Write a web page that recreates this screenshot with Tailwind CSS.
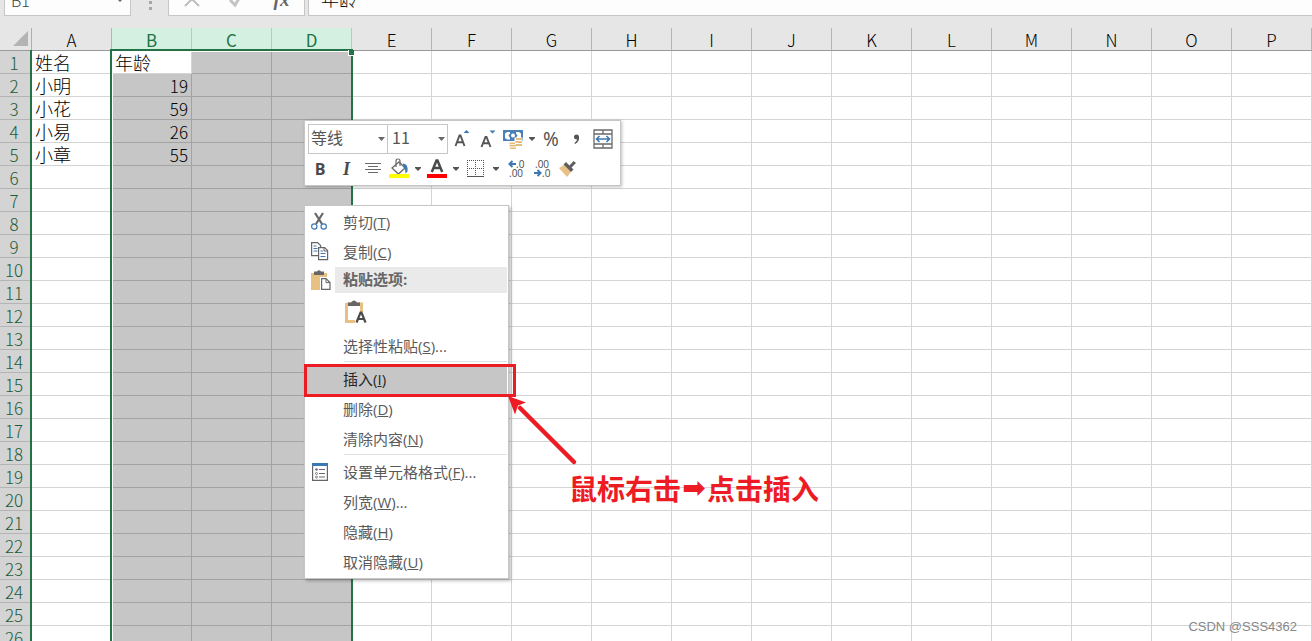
<!DOCTYPE html>
<html lang="zh-CN">
<head>
<meta charset="utf-8">
<title>工作表</title>
<script src="https://cdn.jsdelivr.net/npm/@tailwindcss/browser@4"></script>
</head>
<body class="relative h-screen overflow-hidden bg-[#e6e6e6] font-['Noto_Sans_CJK_SC',sans-serif] text-black">

<!-- Formula bar, scrolled partly out of view -->
<header class="flex h-4 items-end overflow-hidden pl-1 text-[#444]">
  <label class="flex h-7 w-[127px] shrink-0 items-center justify-between border border-[#c6c6c6] bg-[#fdfdfd] pr-1.5 pb-1 pl-1.5">
    <input aria-label="名称框" value="B1" class="w-20 bg-transparent text-[16px] leading-6 font-light outline-none">
    <svg class="h-1 w-2" viewBox="0 0 8 4"><path d="M0 0h8L4 4z" fill="#666"/></svg>
  </label>
  <div class="flex h-7 w-[37px] shrink-0 items-center justify-center">
    <svg class="h-5 w-1" viewBox="0 0 4 20"><path d="M1 3h3v3H1zM1 9h3v3H1zM1 15h3v3H1z" fill="#a6a6a6"/></svg>
  </div>
  <div class="flex h-7 w-[137px] shrink-0 items-center justify-around border border-[#c6c6c6] bg-[#fdfdfd] pb-1">
    <button aria-label="取消"><svg class="h-4 w-4" viewBox="0 0 16 16"><path d="M1 0l14 14M15 0L1 14" stroke="#bdbdbd" stroke-width="2" fill="none"/></svg></button>
    <button aria-label="输入"><svg class="h-4 w-4" viewBox="0 0 16 16"><path d="M1 8l5 5 8-13" stroke="#c4c4c4" stroke-width="3" fill="none"/></svg></button>
    <button aria-label="插入函数" class="font-['Liberation_Serif',serif] text-[19px] leading-6 font-bold text-[#666] italic">fx</button>
  </div>
  <input aria-label="编辑栏" value="年龄" class="ml-[3px] h-7 min-w-0 flex-1 border border-r-0 border-[#c6c6c6] bg-[#fdfdfd] pb-2 pl-3 text-[18px] font-light text-black outline-none">
</header>

<!-- Worksheet -->
<main class="relative mt-3">
  <table class="w-max table-fixed border-separate border-spacing-0 bg-white leading-[21px] font-light">
    <thead><tr id="letters"></tr></thead>
    <tbody id="rows"></tbody>
  </table>
  <div class="absolute top-[22px] bottom-0 left-[30px] w-0.5 bg-[#217346]"></div>
  <div class="absolute top-[21px] bottom-0 left-[110px] w-[243px] border-2 border-b-0 border-[#217346]">
    <div class="h-full border-t border-l border-white"></div>
    <div class="absolute -top-px -right-[3px] size-[6px] border border-t-0 border-r-0 border-white bg-[#217346]"></div>
  </div>
</main>

<!-- Mini toolbar -->
<div role="toolbar" aria-label="格式" class="absolute top-[120px] left-[304px] border border-[#c6c6c6] bg-white p-0.5 pr-1 shadow-[1px_1px_3px_rgba(0,0,0,0.25)]">
  <div class="flex h-[31px] items-center pl-px">
    <div class="relative h-[30px] w-[80px] border border-[#c6c6c6]">
      <select aria-label="字体" class="h-full w-full appearance-none pb-1.5 pl-0.5 text-[16px] leading-[22px] text-[#555]"><option>等线</option></select>
      <svg class="pointer-events-none absolute top-3 right-0.5 h-1 w-[7px]" viewBox="0 0 7 4"><path d="M0 0h7L3.500 4z" fill="#666"/></svg>
    </div>
    <div class="relative h-[30px] w-[60px] border border-l-0 border-[#c6c6c6]">
      <select aria-label="字号" class="h-full w-full appearance-none pb-1.5 pl-1 text-[16px] leading-[22px] text-[#555]"><option>11</option></select>
      <svg class="pointer-events-none absolute top-3 right-0.5 h-1 w-[7px]" viewBox="0 0 7 4"><path d="M0 0h7L3.500 4z" fill="#666"/></svg>
    </div>
    <button aria-label="增大字号" class="flex w-[26px] justify-center"><svg class="size-5" viewBox="0 0 20 20"><path d="M4.500 17L8.500 6.500h1L13.500 17M6 13.200h6" fill="none" stroke="#555" stroke-width="1.900"/><path d="M12.500 4h6l-3-3z" fill="#3c78b4"/></svg></button>
    <button aria-label="减小字号" class="flex w-[26px] justify-center"><svg class="size-5" viewBox="0 0 20 20"><path d="M4.500 18L8.500 8h1L13.500 18M6 14.200h6" fill="none" stroke="#555" stroke-width="1.900"/><path d="M12.500 1.500h6l-3 3z" fill="#3c78b4"/></svg></button>
    <button aria-label="会计数字格式" class="flex w-[26px] justify-center"><svg class="h-5 w-5" viewBox="0 0 20 20"><path d="M0 1h20v11H0z" fill="#4a81b8"/><path d="M2 4.500L4 3h3v1.500L5.500 6.500 7 9v1.500H4L2 9zM18 4.500L16 3h-3v1.500l1.500 2L13 9h5z" fill="#fff"/><circle cx="10" cy="6.500" r="2" fill="#fff"/><path d="M11.500 8.500h8v9h-5v2.500h-9v-7h6z" fill="#fff"/><path d="M13 9h6v2h-6zM12.500 12h6.500v2h-6.500zM12.500 15H19v2h-6.500zM6.500 13.500h5.500v1.800H6.500zM6.500 16h6v1.600h-6zM7 18.400h6V20H7z" fill="#e5bd7d"/></svg></button>
    <button aria-label="更多货币格式" class="flex w-3 justify-center"><svg class="h-1 w-1.5" viewBox="0 0 6 4"><path d="M0 0h6v1L3 4 0 1z" fill="#555"/></svg></button>
    <button aria-label="百分比样式" class="w-[26px] text-center font-['Noto_Sans',sans-serif] text-[19px] leading-6 text-[#555]">%</button>
    <button aria-label="千位分隔样式" class="flex w-[26px] justify-center"><svg class="h-3 w-2" viewBox="0 0 8 12"><path d="M1 4a2.500 2.500 0 0 1 5 0C6.500 7 5 9.500 2 11l-.6-1C3.200 8.800 4 7.500 4 6.300 2 6.500 1 5.500 1 4z" fill="#555"/></svg></button>
    <button aria-label="合并后居中" class="flex w-[26px] justify-center"><svg class="h-5 w-5" viewBox="0 0 20 20"><path d="M1 1h18v18H1zM1 5h18M1 15h18M10 1v4M10 15v4" fill="none" stroke="#6a6a6a" stroke-width="1.300"/><path d="M4 10h12M6.500 7L3.500 10l3 3M13.500 7l3 3-3 3" fill="none" stroke="#3c78b4" stroke-width="1.600"/></svg></button>
  </div>
  <div class="flex h-[29px] items-center text-[#4a4a4a]">
    <button aria-label="加粗" class="w-[26px] text-center font-['Open_Sans',sans-serif] text-[16px] leading-6 font-bold">B</button>
    <button aria-label="倾斜" class="w-[27px] text-center font-['Liberation_Serif',serif] text-[18px] leading-6 font-bold italic">I</button>
    <button aria-label="居中" class="flex w-[26px] justify-center"><svg class="h-[15px] w-4" viewBox="0 0 16 15"><path d="M0 2.500h16M3 5.500h10M0 8.500h16M3 11.500h10" stroke="#6a6a6a"/></svg></button>
    <button aria-label="填充颜色" class="flex w-[26px] justify-center"><svg class="h-[21px] w-5" viewBox="0 0 20 21"><path d="M3 10l7-6 6 6-6.500 6z" fill="#fff" stroke="#6a6a6a" stroke-width="1.300"/><path d="M7 9V3q0-2 2-2t2 2v5" fill="none" stroke="#6a6a6a" stroke-width="1.200"/><path d="M13.500 5.500q6 0 5 8l-2 2q0-4-1.500-6z" fill="#3c78b4"/><path d="M0 16h20v4H0z" fill="#ff0"/></svg></button>
    <button aria-label="更多填充颜色" class="flex w-3 justify-center"><svg class="h-1 w-1.5" viewBox="0 0 6 4"><path d="M0 0h6v1L3 4 0 1z" fill="#555"/></svg></button>
    <button aria-label="字体颜色" class="flex w-[26px] justify-center"><svg class="h-[21px] w-5" viewBox="0 0 20 21"><path d="M4.800 14L9.500 2.500h1L15.200 14M6.500 10h7" fill="none" stroke="#4a4a4a" stroke-width="2.500"/><path d="M0 16h20v4H0z" fill="red"/></svg></button>
    <button aria-label="更多字体颜色" class="flex w-3 justify-center"><svg class="h-1 w-1.5" viewBox="0 0 6 4"><path d="M0 0h6v1L3 4 0 1z" fill="#555"/></svg></button>
    <button aria-label="边框" class="flex w-7 justify-center"><svg class="h-[19px] w-[18px]" viewBox="0 0 18 19" shape-rendering="crispEdges"><path d="M0 1.500h17M0 9.500h17M.500 1v17M8.500 1v17M16.500 1v17" stroke="#555" stroke-dasharray="1 1" fill="none"/><path d="M0 17.500h17" stroke="#555"/></svg></button>
    <button aria-label="更多边框" class="flex w-3 justify-center"><svg class="h-1 w-1.5" viewBox="0 0 6 4"><path d="M0 0h6v1L3 4 0 1z" fill="#555"/></svg></button>
    <button aria-label="增加小数位数" class="w-[26px] pl-1.5 text-center font-['Open_Sans',sans-serif] text-[10px] leading-[9px] font-medium"><span class="flex items-center"><svg class="h-2 w-2" viewBox="0 0 8 8"><path d="M8 4H2M4.500 1l-3 3 3 3" fill="none" stroke="#3c78b4" stroke-width="2"/></svg>.0</span><span class="block pl-px text-left">.00</span></button>
    <button aria-label="减少小数位数" class="w-[26px] pl-1.5 text-center font-['Open_Sans',sans-serif] text-[10px] leading-[9px] font-medium"><span class="block pl-px text-left">.00</span><span class="flex items-center"><svg class="h-2 w-2" viewBox="0 0 8 8"><path d="M0 4h6M3.500 1l3 3-3 3" fill="none" stroke="#3c78b4" stroke-width="2"/></svg>.0</span></button>
    <button aria-label="格式刷" class="flex w-7 justify-center"><svg class="h-4 w-[18px]" viewBox="0 0 18 16"><path d="M0 7l5-3 7 7-4 5z" fill="#e9c083"/><path d="M4.500 3.500L7 1l3.500 3.500L14.500 0 17 2l-4.500 4.500 2 2-2.500 2.500z" fill="#5f5f5f"/></svg></button>
  </div>
</div>

<!-- Context menu -->
<div role="menu" class="absolute top-[205px] left-[304px] w-[205px] border border-[#c6c6c6] bg-white p-px text-[#5a5a5a] shadow-[2px_2px_3px_rgba(0,0,0,0.25)] font-['Open_Sans','Noto_Sans_CJK_SC',sans-serif] text-[15px] leading-[30px]">
  <button role="menuitem" class="flex h-[30px] w-full items-center text-left">
    <span class="flex w-[37px] shrink-0 pl-[5px]"><svg class="h-5 w-[18px]" viewBox="0 0 18 20"><path d="M4 1l7 11M12 1L5 12" stroke="#666" stroke-width="2.200"/><circle cx="3.300" cy="14.500" r="2.700" fill="#fff" stroke="#3c78b4" stroke-width="1.200"/><circle cx="12.700" cy="14.500" r="2.700" fill="#fff" stroke="#3c78b4" stroke-width="1.200"/></svg></span>
    <span>剪切(<u>T</u>)</span></button>
  <button role="menuitem" class="flex h-[30px] w-full items-center text-left">
    <span class="flex w-[37px] shrink-0 pl-[5px]"><svg class="h-5 w-[18px]" viewBox="0 0 18 20"><path d="M.600 .600h6l3 3v10h-9z" fill="#fff" stroke="#666" stroke-width="1.200"/><path d="M2.500 4h3M2.500 6.500h4M2.500 9h4" stroke="#3c78b4"/><path d="M7.600 5.600h6l3 3v9h-9z" fill="#fff" stroke="#666" stroke-width="1.200"/><path d="M13 5.600v3.400h3.500" fill="none" stroke="#666"/><path d="M9.500 9h2.500M9.500 11.500h5M9.500 14.500h5" stroke="#3c78b4"/></svg></span>
    <span>复制(<u>C</u>)</span></button>
  <div class="flex h-[26px] items-center leading-[25px]">
    <span class="flex w-[29px] shrink-0 pl-[5px]"><svg class="h-5 w-5" viewBox="0 0 20 20"><path d="M0 3h16v17H0z" fill="#e9c083"/><path d="M3 1.500h3q2-2.500 4 0h3V5H3z" fill="#666"/><path d="M9 7h6.500l4.500 4.500V20H9z" fill="#fff"/><path d="M10.600 8.600h4.400l4 4v6.800h-8.400z" fill="#fff" stroke="#666" stroke-width="1.200"/><path d="M15 8.600v4h4" fill="none" stroke="#666"/></svg></span>
    <span class="h-full flex-1 bg-[#eaeaea] pl-2 font-bold text-[#666]">粘贴选项:</span>
  </div>
  <div class="flex h-[38px] items-center pl-[39px]">
    <button role="menuitem" aria-label="只保留文本"><svg class="h-6 w-[22px]" viewBox="0 0 22 24"><path d="M1.500 4h15v8M1.500 3v18.500H10" fill="none" stroke="#e9c083" stroke-width="3"/><path d="M3 2.500h3q3-4 6 0h3V6H3z" fill="#666"/><path d="M11.500 22.500l4-10h1l4 10M13.500 19h5.500" fill="none" stroke="#4a4a4a" stroke-width="2.200"/></svg></button>
  </div>
  <button role="menuitem" class="block h-[30px] w-full pl-[37px] text-left">选择性粘贴(<u>S</u>)...</button>
  <hr class="mb-0.5 ml-[38px] border-[#dfe2e5]">
  <button role="menuitem" class="block h-[30px] w-full bg-[#c6c6c6] pl-[37px] text-left text-[#262626]">插入(<u>I</u>)</button>
  <button role="menuitem" class="block h-[30px] w-full pl-[37px] text-left">删除(<u>D</u>)</button>
  <button role="menuitem" class="block h-[30px] w-full pl-[37px] text-left">清除内容(<u>N</u>)</button>
  <hr class="mb-0.5 ml-[38px] border-[#dfe2e5]">
  <button role="menuitem" class="flex h-[30px] w-full items-center text-left">
    <span class="flex w-[37px] shrink-0 pl-[6px]"><svg class="h-[18px] w-4" viewBox="0 0 16 18"><path d="M.600 1h14.800v16.400H.600z" fill="#fff" stroke="#666" stroke-width="1.200"/><path d="M0 0h16v3H0z" fill="#3c78b4"/><path d="M7 6.500h6M7 10.500h6M7 14h6" stroke="#666"/><circle cx="4.500" cy="6.500" r="1.200" fill="#666"/><circle cx="4.500" cy="10.500" r="1" fill="none" stroke="#666" stroke-width=".800"/><circle cx="4.500" cy="14" r="1" fill="none" stroke="#666" stroke-width=".800"/></svg></span>
    <span>设置单元格格式(<u>F</u>)...</span></button>
  <button role="menuitem" class="block h-[30px] w-full pl-[37px] text-left">列宽(<u>W</u>)...</button>
  <button role="menuitem" class="block h-[30px] w-full pl-[37px] text-left">隐藏(<u>H</u>)</button>
  <button role="menuitem" class="block h-[30px] w-full pl-[37px] text-left">取消隐藏(<u>U</u>)</button>
</div>

<!-- Annotations -->
<div class="absolute top-[364px] left-[304px] h-[33px] w-[212px] border-[3px] border-[#ed1c24]"></div>
<svg class="absolute top-[396px] left-[508px] h-[70px] w-[70px]" viewBox="0 0 70 70"><path d="M12 12L66 66" stroke="#ed1c24" stroke-width="4.500" stroke-linecap="round"/><path d="M0 0l18 6.500-8 3-3 9z" fill="#ed1c24"/></svg>
<p class="absolute top-[468px] left-[569px] flex text-[28px] leading-10 font-bold whitespace-nowrap text-[#ed1c24]">鼠标右击<span class="w-[26px] text-center font-['DejaVu_Sans',sans-serif]">➡</span>点击插入</p>
<p class="absolute right-[15px] bottom-1 font-['Liberation_Sans',sans-serif] text-[13px] leading-5 text-[#888]">CSDN @SSS4362</p>

<script>
  const letters = "ABCDEFGHIJKLMNOP".split("");
  const data = [["姓名", "年龄"], ["小明", "19"], ["小花", "59"], ["小易", "26"], ["小章", "55"]];
  const add = (parent, tag, cls, text) => {
    const el = document.createElement(tag);
    el.className = cls;
    el.textContent = text || "";
    parent.appendChild(el);
    return el;
  };

  const head = document.getElementById("letters");
  add(head, "th", "h-[23px] w-8 border-r border-b border-r-[#b0b0b0] border-b-[#999] bg-[#e6e6e6] p-0", "").innerHTML =
    '<svg class="ml-3 h-4 w-4" viewBox="0 0 16 16"><path d="M16 0v15H1z" fill="#b4b4b4"/></svg>';
  letters.forEach((l, c) => {
    const selected = c >= 1 && c <= 3;
    add(head, "th", selected
      ? "h-[23px] w-20 border-r border-b border-r-[#b9c9c0] border-b-[#999] bg-[#d3f0e0] p-0 pt-px text-[17px] font-normal text-[#217346]"
      : "h-[23px] w-20 border-r border-b border-r-[#b4b4b4] border-b-[#999] bg-[#e6e6e6] p-0 pt-px text-[17px] font-light", l);
  });

  const body = document.getElementById("rows");
  for (let r = 0; r < 26; r++) {
    const tr = add(body, "tr", "", "");
    add(tr, "th", "h-[23px] border-b border-[#b4b4b4] bg-[#d4d4d4] p-0 pt-px pr-1 text-[17px] font-light text-[#1a5c38]", String(r + 1));
    letters.forEach((l, c) => {
      const text = data[r] && data[r][c];
      const selected = c >= 1 && c <= 3 && !(r === 0 && c === 1);
      if (selected) add(tr, "td", "h-[23px] border-r border-b border-[#a3a3a3] bg-[#c6c6c6] p-0 pt-px pr-[3px] text-right text-[17px]", text);
      else add(tr, "td", "h-[23px] border-r border-b border-[#d4d4d4] p-0 pt-px pl-[3px] text-[18px]", text);
    });
  }
</script>
</body>
</html>
